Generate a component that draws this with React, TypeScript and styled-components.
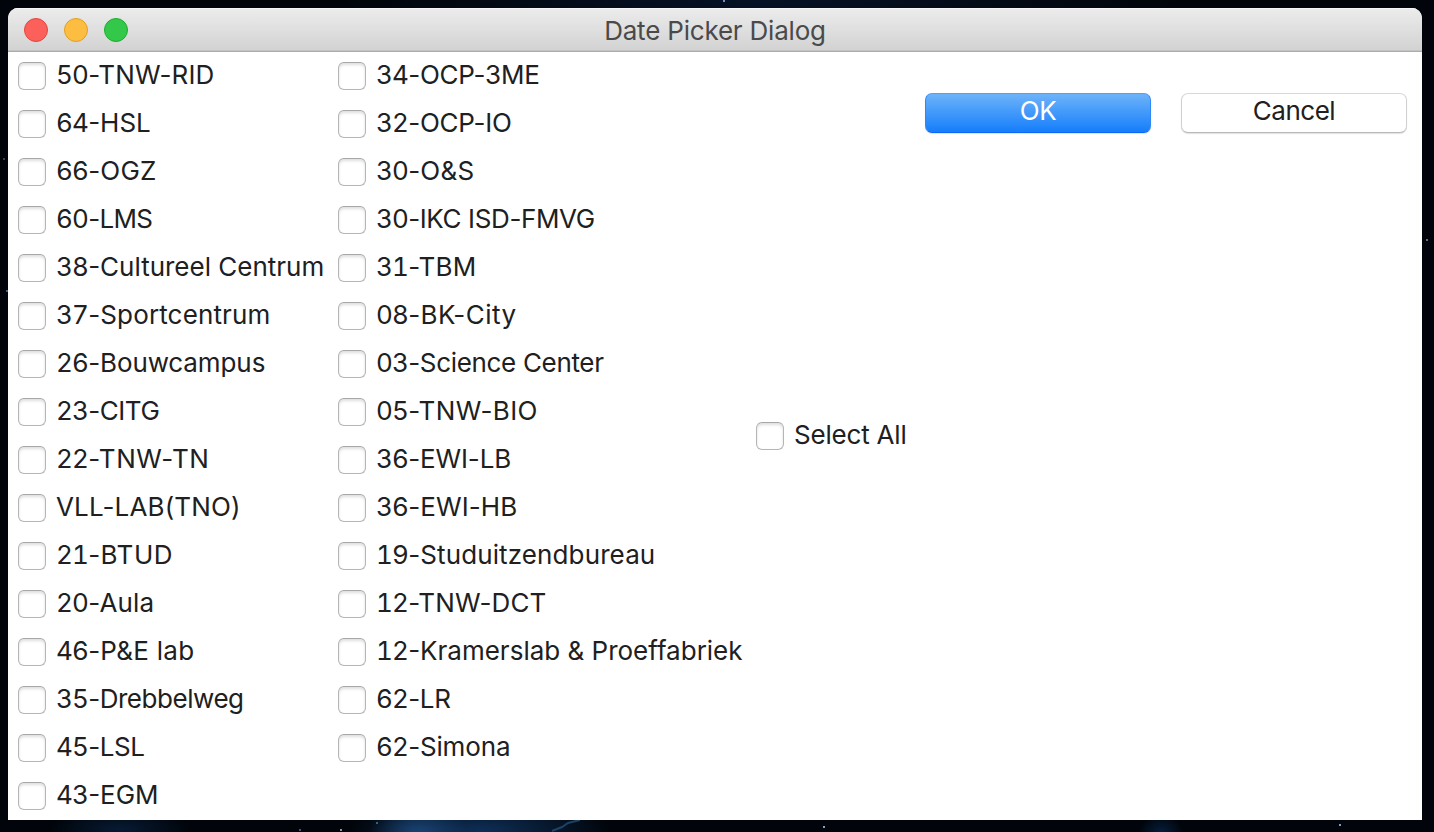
import React from "react";
import styled, { createGlobalStyle } from "styled-components";

const GlobalStyle = createGlobalStyle`
  * { box-sizing: border-box; }
  body { margin: 0; background: #01040a; }
`;

const Desktop = styled.div`
  position: relative;
  width: 1434px;
  height: 832px;
  padding: 8px 12px 12px 8px;
  overflow: hidden;
  background:
    radial-gradient(ellipse 50px 34px at 418px 836px, #1b4779 0%, rgba(22, 62, 108, 0) 100%),
    radial-gradient(ellipse 130px 40px at 480px 832px, #0e2f58 0%, rgba(14, 42, 76, 0) 100%),
    radial-gradient(ellipse 70px 24px at 120px 830px, #071a34 0%, rgba(6, 20, 40, 0) 100%),
    radial-gradient(ellipse 22px 20px at 1161px 834px, #062040 0%, rgba(6, 20, 40, 0) 100%),
    radial-gradient(ellipse 420px 40px at 760px 0, #051226 0%, rgba(4, 14, 30, 0) 100%),
    #01050b;
  font-family: Inter, "Liberation Sans", sans-serif;
  font-size: 26px;
  color: #202020;
`;

const Stars = styled.svg`
  position: absolute;
  inset: 0;
  pointer-events: none;
`;

const Window = styled.div`
  position: relative;
  display: flex;
  flex-direction: column;
  height: 812px;
  border-radius: 10px 10px 0 0;
  overflow: hidden;
  background: #fff;
`;

const TitleBar = styled.header`
  display: grid;
  grid-template-columns: 120px 1fr 120px;
  align-items: center;
  height: 44px;
  padding: 0 16px;
  background: linear-gradient(#ececec, #d2d2d2);
  border-bottom: 1px solid #acacac;
  box-shadow: inset 0 1px 0 #f5f5f5, inset 0 -1px 0 #c4c4c4;
`;

const Lights = styled.div`
  display: flex;
  gap: 16px;
`;

const Light = styled.span<{ $fill: string; $edge: string }>`
  width: 24px;
  height: 24px;
  border-radius: 50%;
  background: ${(p) => p.$fill};
  border: 1px solid ${(p) => p.$edge};
`;

const Title = styled.h1`
  margin: 0;
  padding-top: 2px;
  text-align: center;
  font-size: 26px;
  line-height: 32px;
  font-weight: 400;
  letter-spacing: -0.2px;
  color: #4a4a4a;
`;

const Body = styled.main`
  flex: 1;
  display: flex;
`;

const Column = styled.div<{ $width: number; $indent?: number; $centered?: boolean }>`
  display: flex;
  flex-direction: column;
  flex: none;
  width: ${(p) => p.$width}px;
  padding-left: ${(p) => p.$indent ?? 0}px;
  justify-content: ${(p) => (p.$centered ? "center" : "flex-start")};
`;

const Option = styled.label`
  display: flex;
  align-items: center;
  gap: 10px;
  height: 48px;
  white-space: nowrap;
`;

const Box = styled.input`
  appearance: none;
  flex: none;
  width: 28px;
  height: 28px;
  margin: 0;
  border: 1px solid #b5b5b5;
  border-top-color: #a6a6a6;
  border-radius: 6px;
  background: #fff;
  box-shadow: inset 0 2px 3px rgba(0, 0, 0, 0.13);
`;

const OptionText = styled.span<{ $tracking: number }>`
  height: 34px;
  line-height: 32px;
  letter-spacing: ${(p) => p.$tracking}px;
`;

const Code = styled.span`
  font-variant-numeric: tabular-nums;
  letter-spacing: -0.8px;
`;

const Actions = styled.div`
  display: flex;
  gap: 30px;
  margin: 41px 0 0 auto;
  padding-right: 15px;
`;

const Button = styled.button<{ $primary?: boolean }>`
  width: 226px;
  height: 40px;
  padding: 0 0 5px;
  border: 1px solid;
  border-color: ${(p) => (p.$primary ? "#4ba0f8 #2f88f8 #0f66f5" : "#d8d8d8 #d0d0d0 #b9b9b9")};
  border-radius: 7px;
  background: ${(p) => (p.$primary ? "linear-gradient(#6db3f9, #157efb)" : "#fff")};
  box-shadow: 0 1px 1px rgba(0, 0, 0, 0.12);
  color: ${(p) => (p.$primary ? "#fff" : "#202020")};
  font: inherit;
  line-height: 32px;
  letter-spacing: -0.5px;
`;

type Item = [label: string, tracking?: number];

const left: Item[] = [
  ["50-TNW-RID", 0.15],
  ["64-HSL"],
  ["66-OGZ", 0.25],
  ["60-LMS", -0.7],
  ["38-Cultureel Centrum"],
  ["37-Sportcentrum", 0.15],
  ["26-Bouwcampus", -0.1],
  ["23-CITG", -0.4],
  ["22-TNW-TN", 0.6],
  ["VLL-LAB(TNO)", 0.15],
  ["21-BTUD", 0.5],
  ["20-Aula", 0.2],
  ["46-P&E lab", 0.25],
  ["35-Drebbelweg", -0.45],
  ["45-LSL", -0.4],
  ["43-EGM"],
];

const right: Item[] = [
  ["34-OCP-3ME", -0.2],
  ["32-OCP-IO", -0.2],
  ["30-O&S", 0.25],
  ["30-IKC ISD-FMVG", -0.37],
  ["31-TBM", 0.25],
  ["08-BK-City", 0.5],
  ["03-Science Center", -0.32],
  ["05-TNW-BIO", 0.4],
  ["36-EWI-LB", -0.12],
  ["36-EWI-HB", 0.1],
  ["19-Studuitzendbureau", 0.12],
  ["12-TNW-DCT", 0.15],
  ["12-Kramerslab & Proeffabriek"],
  ["62-LR", -0.3],
  ["62-Simona", -0.15],
];

function CheckOption({ item: [label, tracking = 0] }: { item: Item }) {
  const code = /^\d+/.exec(label)?.[0] ?? "";
  return (
    <Option>
      <Box type="checkbox" />
      <OptionText $tracking={tracking}>
        {code && <Code>{code}</Code>}
        {label.slice(code.length)}
      </OptionText>
    </Option>
  );
}

const stars: [number, number, string][] = [
  [723, 0, "#6f93c8"], [823, 826, "#6fa3d8"], [1339, 824, "#7c9cba"],
  [1426, 239, "#65707c"], [6, 290, "#43607c"], [3, 158, "#39424c"],
  [340, 829, "#8a93a0"], [376, 822, "#2c6680"], [299, 829, "#45566c"],
];

export default function App() {
  return (
    <Desktop>
      <GlobalStyle />
      <Stars width="1434" height="832">
        {stars.map(([x, y, fill]) => (
          <rect key={`${x}-${y}`} x={x} y={y} width="2" height="2" fill={fill} />
        ))}
        <path d="M552 831l10-4 6-4 12-3" stroke="#2b628f" strokeWidth="2" opacity=".6" fill="none" />
      </Stars>
      <Window>
        <TitleBar>
          <Lights>
            <Light $fill="#fc605b" $edge="#e2463f" />
            <Light $fill="#fdbd41" $edge="#dfa023" />
            <Light $fill="#34c84a" $edge="#1dad2b" />
          </Lights>
          <Title>Date Picker Dialog</Title>
        </TitleBar>
        <Body>
          <Column $width={330} $indent={10}>
            {left.map((item) => <CheckOption key={item[0]} item={item} />)}
          </Column>
          <Column $width={418}>
            {right.map((item) => <CheckOption key={item[0]} item={item} />)}
          </Column>
          <Column $width={160} $centered>
            <CheckOption item={["Select All", -0.2]} />
          </Column>
          <Actions>
            <Button $primary>OK</Button>
            <Button>Cancel</Button>
          </Actions>
        </Body>
      </Window>
    </Desktop>
  );
}
